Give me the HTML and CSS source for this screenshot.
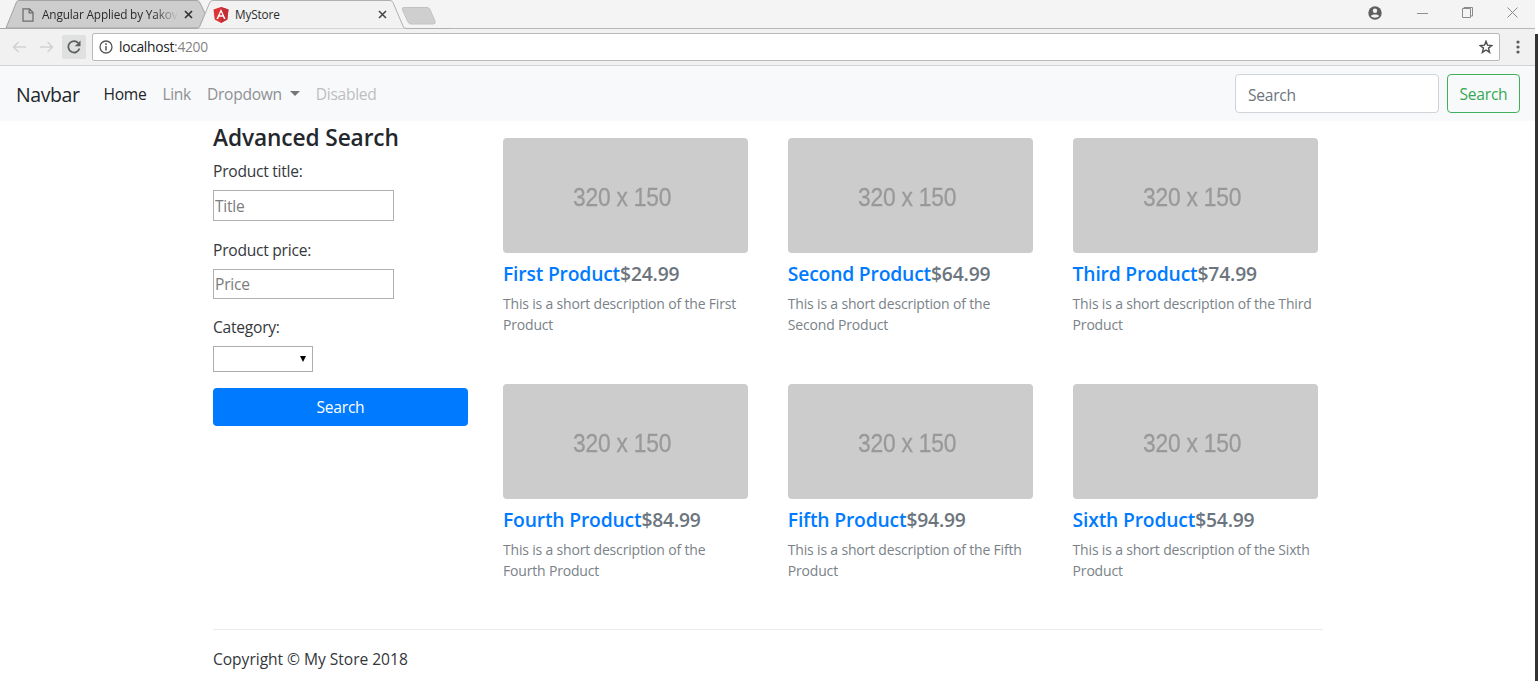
FILE: index.html
```html
<!DOCTYPE html>
<html lang="en">
<head>
<meta charset="utf-8">
<title>MyStore</title>
<link rel="stylesheet" href="styles.css">
</head>
<body>
<div class="window">
  <header class="tabstrip">
    <svg class="tabshapes" width="450" height="29" viewBox="0 0 450 29">
      <path d="M6 28 L16.5 2 Q17.3 .5 19 .5 H197 Q199 .5 200 3 L205 13.5 L199 28 Z" fill="#cdcdcd" stroke="#a3a3a3"/>
      <path d="M0 28.5 H197 Q199 28.5 200 26 L209.500 3 Q210.500 .5 213 .5 H390 Q392 .5 393 2.500 L403 26 Q404 28.500 406 28.500 H450" fill="#f2f2f2" stroke="#b0b0b0"/>
      <path d="M0 28.500 H197" stroke="#a9a9a9"/>
      <path d="M404 7.500 H427 Q429 7.500 430 9.500 L435 21 Q436 24 433 24 H411 Q409 24 408 22 L402.500 10 Q401.500 7.500 404 7.500Z" fill="#cfcfcf" stroke="#c2c2c2"/>
    </svg>
    <div class="tab tab-back">
      <svg width="12" height="14" viewBox="0 0 12 14"><path d="M1 .8H7.500L11 4.500V13.200H1Z M7.200 1V4.800H11" fill="none" stroke="#6e6e6e" stroke-width="1.300"/></svg>
      <span class="tab-title tab-title-back">Angular Applied by Yakov</span>
      <svg class="x" width="9" height="9" viewBox="0 0 9 9"><path d="M1 1L8 8M8 1L1 8" stroke="#333" stroke-width="1.700"/></svg>
    </div>
    <div class="tab tab-front">
      <svg width="16" height="16" viewBox="0 0 16 16"><path d="M8 0L15.500 2.600 14.300 12.500 8 16 1.700 12.500 .5 2.600Z" fill="#dd3237"/><path d="M8 0L15.500 2.600 14.300 12.500 8 16Z" fill="#c22e33"/><path d="M8 1.900L3.400 12H5.100L6 9.700H10L10.900 12H12.600ZM8 5.100L9.400 8.300H6.600Z" fill="#fff" fill-rule="evenodd"/></svg>
      <span class="tab-title">MyStore</span>
      <svg class="x" width="9" height="9" viewBox="0 0 9 9"><path d="M1 1L8 8M8 1L1 8" stroke="#444" stroke-width="1.500"/></svg>
    </div>
    <div class="winctl">
      <svg width="14" height="14" viewBox="0 0 14 14"><circle cx="7" cy="7" r="6.700" fill="#5f5f5f"/><circle cx="7" cy="4.800" r="2.200" fill="#f3f3f3"/><path d="M2.800 10C3.300 7.900 10.700 7.900 11.200 10 9.500 12.300 4.500 12.300 2.800 10Z" fill="#f3f3f3"/></svg>
      <svg width="11" height="12" viewBox="0 0 11 12"><path d="M0 6.500H11" stroke="#8f8f8f"/></svg>
      <svg width="11" height="11" viewBox="0 0 11 11"><path d="M.5 1.500H8.500V10.500H.5ZM2 1.500V.5H10.500V9H8.500" fill="none" stroke="#8b8b8b"/></svg>
      <svg width="11" height="11" viewBox="0 0 11 11"><path d="M.5 .5L10.500 10.500M10.500 .5L.5 10.500" stroke="#8b8b8b"/></svg>
    </div>
  </header>
  <div class="toolbar">
    <svg class="arrow" width="14" height="12" viewBox="0 0 14 12"><path d="M14 6H1.500M6.500 1L1.500 6L6.500 11" fill="none" stroke="#d2d2d2" stroke-width="1.500"/></svg>
    <svg class="arrow" width="14" height="12" viewBox="0 0 14 12"><path d="M0 6H12.500M7.500 1L12.500 6L7.500 11" fill="none" stroke="#d2d2d2" stroke-width="1.500"/></svg>
    <span class="reload"><svg width="14" height="14" viewBox="0 0 14 14"><path d="M11.300 3A5.700 5.700 0 1 0 12.500 8.600" fill="none" stroke="#5c5d5d" stroke-width="1.700"/><path d="M13.500 .5V6.200H7.800Z" fill="#5c5d5d"/></svg></span>
    <div class="omnibox">
      <svg width="14" height="14" viewBox="0 0 14 14"><circle cx="7" cy="7" r="6" fill="none" stroke="#555" stroke-width="1.300"/><path d="M7 6V10.500M7 3.300V4.900" stroke="#555" stroke-width="1.500"/></svg>
      <span class="url">localhost<span class="port">:4200</span></span>
      <svg class="star" width="14" height="14" viewBox="0 0 14 14"><path d="M7 1.300L8.500 5.200 12.800 5.500 9.500 8.100 10.600 12.400 7 10 3.400 12.400 4.500 8.100 1.200 5.500 5.500 5.200Z" fill="none" stroke="#4c4c4c" stroke-width="1.400"/></svg>
    </div>
    <svg class="dots" width="4" height="14" viewBox="0 0 4 14"><g fill="#5a5a5a"><circle cx="2" cy="2" r="1.600"/><circle cx="2" cy="7" r="1.600"/><circle cx="2" cy="12" r="1.600"/></g></svg>
  </div>
  <nav class="navbar">
    <a class="brand">Navbar</a>
    <a class="nav-link active">Home</a>
    <a class="nav-link">Link</a>
    <a class="nav-link dropdown">Dropdown</a>
    <a class="nav-link disabled">Disabled</a>
    <input class="nav-search" placeholder="Search">
    <button class="btn-outline">Search</button>
  </nav>
  <main class="content">
    <form class="sidebar">
      <h2 class="heading">Advanced Search</h2>
      <label class="label">Product title:</label>
      <input class="field" placeholder="Title">
      <label class="label">Product price:</label>
      <input class="field field-price" placeholder="Price">
      <label class="label">Category:</label>
      <div class="select"><svg width="6" height="6" viewBox="0 0 6 6"><path d="M0 0H6L3 6Z" fill="#000"/></svg></div>
      <button class="btn-primary" type="button">Search</button>
    </form>
    <section class="products">
      <article class="card"><div class="thumb"><span class="size">320 x 150</span></div><h4 class="title"><a class="name">First Product</a>$24.99</h4><p class="desc">This is a short description of the First Product</p></article>
      <article class="card"><div class="thumb"><span class="size">320 x 150</span></div><h4 class="title"><a class="name">Second Product</a>$64.99</h4><p class="desc">This is a short description of the Second Product</p></article>
      <article class="card"><div class="thumb"><span class="size">320 x 150</span></div><h4 class="title"><a class="name">Third Product</a>$74.99</h4><p class="desc">This is a short description of the Third Product</p></article>
      <article class="card"><div class="thumb"><span class="size">320 x 150</span></div><h4 class="title"><a class="name">Fourth Product</a>$84.99</h4><p class="desc">This is a short description of the Fourth Product</p></article>
      <article class="card"><div class="thumb"><span class="size">320 x 150</span></div><h4 class="title"><a class="name">Fifth Product</a>$94.99</h4><p class="desc">This is a short description of the Fifth Product</p></article>
      <article class="card"><div class="thumb"><span class="size">320 x 150</span></div><h4 class="title"><a class="name">Sixth Product</a>$54.99</h4><p class="desc">This is a short description of the Sixth Product</p></article>
    </section>
  </main>
  <footer class="footer">Copyright © My Store 2018</footer>
</div>
<div class="edge"></div>
</body>
</html>
```

FILE: styles.css
```css
* { box-sizing: border-box; }
body {
  margin: 0;
  height: 681px;
  display: flex;
  overflow: hidden;
  background: #fff;
  color: #34383c;
  font: 15.600px/24px "Open Sans", "Noto Sans", sans-serif;
  letter-spacing: -.25px;
}
svg { display: block; flex: none; }
input, button { font: inherit; letter-spacing: inherit; margin: 0; }
.window { width: 1535px; flex: none; }
.edge { flex: 1; margin-top: 34px; background: #303433; }

/* Browser chrome */
.tabstrip {
  position: relative;
  display: flex;
  height: 29px;
  background: #f4f4f4;
  border-bottom: 1px solid #b7b7b7;
}
.tabshapes { position: absolute; left: 0; top: 0; }
.tab {
  position: relative;
  display: flex;
  align-items: center;
  height: 29px;
  font-size: 11.800px;
  letter-spacing: -.15px;
  color: #2b2b2b;
}
.tab-back { width: 213px; padding-left: 22px; }
.tab-front { width: 190px; }
.tab-title { margin-left: 6px; padding-bottom: 1px; white-space: nowrap; }
.tab-title-back {
  width: 135px;
  margin-left: 8px;
  overflow: hidden;
  -webkit-mask-image: linear-gradient(90deg, #000 112px, transparent 136px);
  mask-image: linear-gradient(90deg, #000 112px, transparent 136px);
}
.tab-back .x { margin-left: 7px; }
.tab-front .x { margin-left: auto; margin-right: 16px; }
.winctl {
  display: flex;
  align-items: center;
  gap: 34px;
  height: 25px;
  margin-left: auto;
  padding-right: 17px;
}
.winctl svg:first-child { margin-right: 1px; }
.toolbar {
  display: flex;
  align-items: center;
  height: 37px;
  padding-left: 12px;
  background: #f1f1f1;
  border-bottom: 1px solid #d2d3d4;
}
.arrow { margin-right: 14px; }
.reload {
  display: flex;
  align-items: center;
  justify-content: center;
  width: 24px;
  height: 24px;
  margin: 0 6px 0 -6px;
  background: #dfe0e0;
  border-radius: 2px;
}
.omnibox {
  display: flex;
  align-items: center;
  width: 1408px;
  height: 28px;
  padding: 0 6px;
  background: #fff;
  border: 1px solid #b9b9b9;
  border-radius: 2px;
}
.url { margin-left: 6px; font-size: 13.800px; letter-spacing: -.3px; color: #222; }
.port { color: #858585; }
.star { margin-left: auto; }
.dots { margin-left: 16px; }

/* Navbar */
.navbar {
  display: flex;
  align-items: center;
  height: 55px;
  padding: 0 15px 0 16px;
  background: #f8f9fb;
}
.brand { width: 87.500px; padding-top: 2px; font-size: 19.500px; letter-spacing: -.4px; color: #24272a; }
.nav-link { margin-right: 16px; letter-spacing: -.3px; color: #8f9092; }
.active { color: #222426; }
.disabled { color: #bdbebf; }
.dropdown::after {
  content: "";
  display: inline-block;
  margin-left: 8px;
  vertical-align: 4px;
  border: 5px solid transparent;
  border-top-color: #777;
  border-bottom: 0;
}
.nav-search {
  width: 204px;
  height: 39px;
  margin-left: auto;
  padding: 3px 12px 0;
  border: 1px solid #ced4da;
  border-radius: 4px;
  background: #fff;
}
.nav-search::placeholder { color: #6c757d; }
.btn-outline {
  width: 73px;
  height: 39px;
  margin-left: 8px;
  padding: 0;
  color: #35a853;
  background: transparent;
  border: 1px solid #41b05d;
  border-radius: 4px;
}

/* Page body */
.content { display: flex; gap: 35px; margin-left: 213px; }
.sidebar { display: flex; flex-direction: column; width: 255px; }
.heading { margin: 0 0 7px; padding-top: 2px; font-size: 22.700px; line-height: 29px; font-weight: 600; letter-spacing: -.1px; color: #24282c; }
.label { line-height: 24px; margin: 0 0 7px; }
.field {
  width: 181px;
  height: 31px;
  margin-bottom: 17px;
  padding: 1px 1px 0;
  border: 1px solid #b0b0b0;
}
.field-price { height: 30px; margin-bottom: 16px; padding-top: 0; }
.field::placeholder { color: #7c7c7c; }
.select {
  display: flex;
  align-items: center;
  justify-content: flex-end;
  width: 100px;
  height: 26px;
  padding-right: 6px;
  margin-bottom: 16px;
  border: 1px solid #adadad;
}
.btn-primary { height: 38px; border: 0; border-radius: 4px; background: #007bff; color: #fff; }
.products {
  display: grid;
  grid-template-columns: repeat(3, 245px);
  grid-template-rows: 246px 245px;
  column-gap: 39.800px;
  padding-top: 17px;
}
.thumb {
  display: flex;
  align-items: center;
  justify-content: center;
  height: 114.500px;
  padding: 4px 6px 0 0;
  background: #ccc;
  border-radius: 4px;
  color: #999;
  font: 26.500px "Liberation Sans", sans-serif;
  -webkit-text-stroke: .3px #999;
}
.size { transform: scaleX(.86); }
.title { margin: 9px 0 7px; font-size: 19.300px; line-height: 24px; font-weight: 600; letter-spacing: -.18px; color: #6c757d; }
.name { color: #007bff; }
.desc { margin: 0; font-size: 14px; line-height: 21.600px; letter-spacing: -.18px; color: #7a8288; }
.footer {
  width: 1110px;
  margin-left: 213px;
  padding-top: 17px;
  border-top: 1px solid #ebebeb;
  letter-spacing: -.04px;
}
```
